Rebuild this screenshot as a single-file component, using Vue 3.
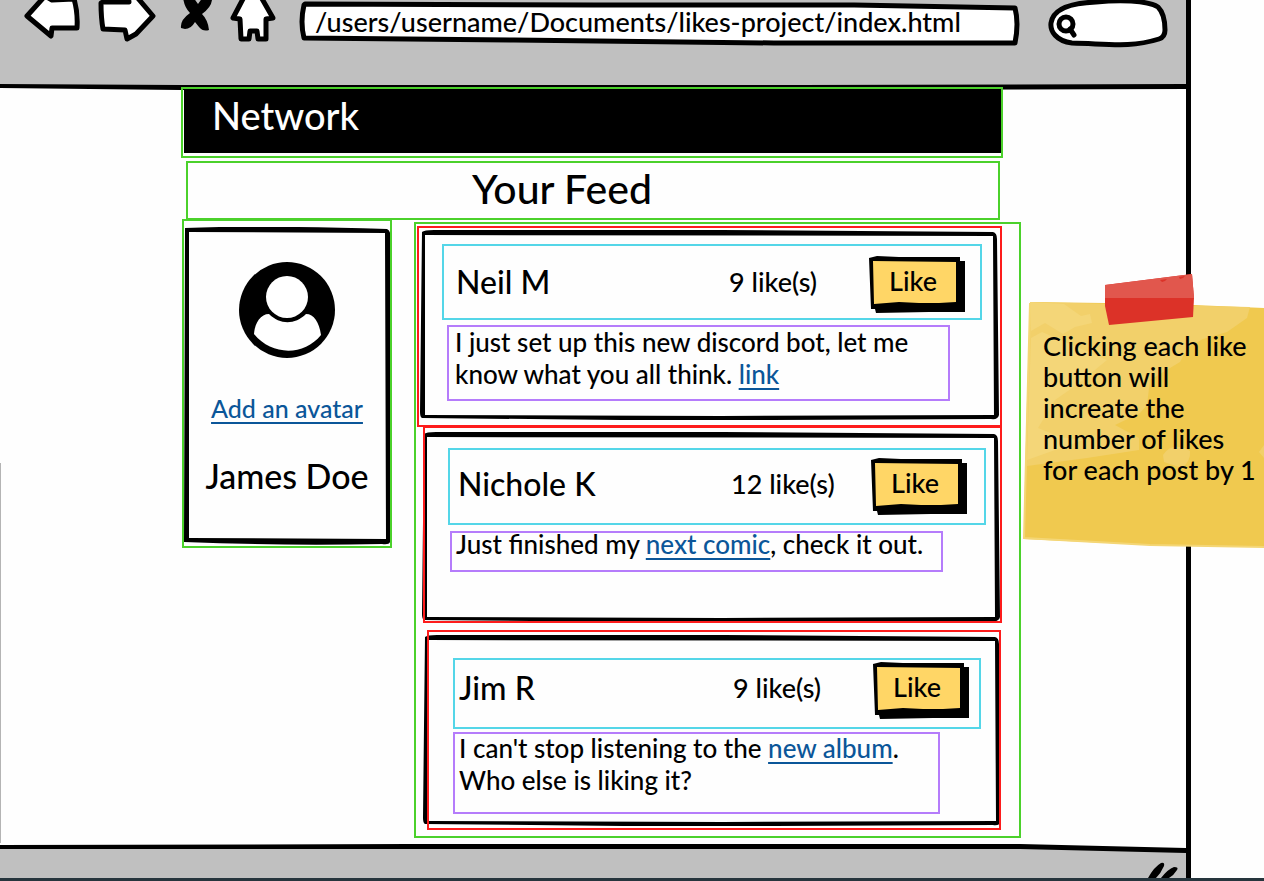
<script setup>
import { ref } from 'vue'

const address = ref('/users/username/Documents/likes-project/index.html')
const query = ref('')

const posts = ref([
  {
    id: 'neil',
    author: 'Neil M',
    likes: 9,
    before: 'I just set up this new discord bot, let me know what you all think. ',
    link: 'link',
    after: ''
  },
  {
    id: 'nichole',
    author: 'Nichole K',
    likes: 12,
    before: 'Just finished my ',
    link: 'next comic',
    after: ', check it out.'
  },
  {
    id: 'jim',
    author: 'Jim R',
    likes: 9,
    before: "I can't stop listening to the ",
    link: 'new album',
    after: '. Who else is liking it?'
  }
])
</script>

<template>
  <div class="board">
    <div class="browser">
      <div class="toolbar">
        <button class="tool" type="button" aria-label="Back">
          <svg viewBox="22 0 60 44" width="60" height="44">
            <path class="shape" d="M45-4 L27 16 L51 36 L52 28 L77 28 Q78 12 74-1 L52 0 Z" />
          </svg>
        </button>
        <button class="tool" type="button" aria-label="Forward">
          <svg viewBox="98 0 60 44" width="60" height="44">
            <path class="shape" d="M101 3 Q101 18 103 29 L125 30 L127 39 L136 34 L153 16 L136-4 L128-5 L129 2 L103 2 Z" />
          </svg>
        </button>
        <button class="tool" type="button" aria-label="Stop">
          <svg viewBox="174 0 40 44" width="40" height="44">
            <path d="M183-3 L193-3 L198 4 L203-3 L212-3 Q213 6 202 14 Q208 20 209 30 Q203 32 199 27 L195 22 Q191 29 185 29 L181 28 Q180 20 190 13 Q184 7 183-3Z" />
          </svg>
        </button>
        <button class="tool" type="button" aria-label="Home">
          <svg viewBox="230 0 48 44" width="48" height="44">
            <path class="shape" d="M244-3 L233 18 L240 19 L241 39 L249 39 L250 31 L257 31 L258 39 L266 39 L266 19 L273 18 L261-3 Z" />
          </svg>
        </button>
        <label class="address">
          <svg class="backdrop" viewBox="0 0 728 48" preserveAspectRatio="none" aria-hidden="true">
            <path class="shape" d="M11 4 L300 5 L560 5 L721 8 Q725 23 721 43 L480 43 L220 40 L10 38 Q6 22 10 5 Z" />
          </svg>
          <input v-model="address" type="text" aria-label="Address" />
        </label>
        <label class="search">
          <svg class="backdrop" viewBox="1038 0 132 48" preserveAspectRatio="none" aria-hidden="true">
            <path class="shape" d="M1072 43 C1056 41 1050 31 1051 23 C1053 9 1070 3 1096 2 C1118 0 1147 0 1158 7 C1164 13 1165 21 1165 30 Q1165 37 1159 39 C1130 48 1110 44 1072 43 Z" />
            <circle class="shape" cx="1066" cy="24" r="7" />
            <path class="shape" d="M1070 29 L1074 35" />
          </svg>
          <input v-model="query" type="search" aria-label="Search" />
        </label>
        <svg class="rule" viewBox="0 0 1186 8" preserveAspectRatio="none" aria-hidden="true">
          <path d="M0 2 L180 3 L800 3 L1186 2 L1186 7 L800 8 L180 8 L0 6 Z" />
        </svg>
      </div>

      <main class="page">
        <header class="banner"><h1>Network</h1></header>
        <h2 class="title">Your Feed</h2>

        <div class="columns">
          <aside class="profile">
            <svg class="backdrop" viewBox="0 0 206 318" preserveAspectRatio="none" aria-hidden="true">
              <path fill-rule="evenodd" d="M1 1 Q70-2 203 2 Q207 4 206 10 L206 315 Q205 318 198 317 Q100 319 0 315 Z M5 5 L201 6 L202 312 L5 311 Z" />
            </svg>
            <svg class="avatar" viewBox="0 0 96 96" role="img" aria-label="Avatar">
              <circle cx="48" cy="48" r="48" />
              <circle class="paper" cx="48" cy="35" r="21" />
              <path class="paper" d="M15 72 C16 60 22 52 30 52 C41 63 56 63 67 52 C75 52 80 60 82 73 C65 94 33 94 15 72Z" />
            </svg>
            <a class="avatar-link" href="#avatar">Add an avatar</a>
            <p class="profile-name">James Doe</p>
          </aside>

          <section class="feed" aria-label="Feed">
            <article v-for="post in posts" :key="post.id" class="post" :class="post.id">
              <svg class="backdrop" viewBox="0 0 578 190" preserveAspectRatio="none" aria-hidden="true">
                <path fill-rule="evenodd" d="M2 2 Q4 0 14 0 L300 0 L572 2 Q576 3 576 9 L578 185 Q577 190 570 189 L350 190 L200 190 L2 188 Q0 187 0 182 L1 90 Z M5 5 L572 6 L573 185 L300 186 L5 185 Z" />
              </svg>
              <div class="meta">
                <h3>{{ post.author }}</h3>
                <span class="likes">{{ post.likes }} like(s)</span>
                <button class="like" type="button" @click="post.likes++">
                  <svg class="backdrop" viewBox="0 0 96 57" preserveAspectRatio="none" aria-hidden="true">
                    <path d="M0 2 L8 0 L30 1 L91 1 L91 5 L96 5 L96 56 L60 56 L7 57 L6 53 L2 53 Z" />
                    <path class="gold" d="M4 5 L87 6 L87 46 L70 47 L50 47 L30 46 L5 48 Z" />
                  </svg>
                  <span>Like</span>
                </button>
              </div>
              <p class="body">{{ post.before }}<a :href="'#' + post.id">{{ post.link }}</a>{{ post.after }}</p>
            </article>
          </section>
        </div>
      </main>

      <footer class="status">
        <svg class="horizon" viewBox="0 0 1186 12" preserveAspectRatio="none" aria-hidden="true">
          <path class="floor" d="M0 4 L410 3 L1020 3 L1186 8 L1186 12 L0 12 Z" />
          <path d="M0 2 L410 1 L1020 1 L1186 5 L1186 10 L1020 6 L410 6 L0 6 Z" />
        </svg>
        <svg class="grip" viewBox="0 0 34 16" width="34" height="16" aria-hidden="true">
          <path d="M0 16 Q6 5 13 1 Q17 0 16 4 Q13 11 8 16 Z M13 16 Q20 7 26 5 Q31 5 29 8 Q26 13 21 16 Z" />
        </svg>
      </footer>
    </div>

    <aside class="note">
      <svg class="backdrop" viewBox="1023 272 241 276" preserveAspectRatio="none" aria-hidden="true">
        <path fill="#f0c94f" d="M1030 302 L1105 303 L1194 305 L1264 308 L1264 547 L1150 545 L1024 539 L1025 480 L1027 400 Z" />
        <path fill="#f2d06a" d="M1030 302 L1250 307 L1247 318 L1227 332 L1203 339 L1188 347 L1180 362 L1150 380 L1147 405 L1140 413 L1115 425 L1139 438 L1139 450 L1087 458 L1027 466 Z" />
        <path fill="#f4d678" d="M1030 302 L1064 304 L1081 316 L1090 314 L1092 323 L1075 327 L1063 334 L1045 323 L1031 331 Z M1031 338 L1042 332 L1107 360 L1078 384 L1055 400 L1038 428 L1060 437 L1083 440 L1027 460 Z" />
        <path fill="#f2d06a" d="M1163 455 Q1172 441 1190 451 Q1191 461 1182 468 L1164 462 Z M1259 452 L1264 445 L1264 458 Z" />
        <path class="edge" d="M1030 303 L1027 420 L1024 538 L1150 545 L1264 547" />
        <path fill="#dc3228" d="M1105 285 L1192 274 L1194 298 L1193 317 L1109 325 L1105 306 Z" />
        <path fill="#e1574d" d="M1105 285 L1192 274 L1194 298 L1105 298 Z" />
        <path fill="#dc3228" d="M1160 280 L1167 279 Q1165 282 1162 282 Z M1179 277 L1185 276 Q1183 279 1180 279 Z" />
      </svg>
      <p>Clicking each like<br />button will<br />increate the<br />number of likes<br />for each post by 1</p>
    </aside>

    <div class="taskbar"></div>
  </div>
</template>

<style>
body {
  margin: 0;
  background: #fefefe;
}
</style>

<style scoped>
.board {
  position: relative;
  display: flex;
  flex-direction: column;
  min-height: 100vh;
  overflow: hidden;
  color: #000;
  font-family: Lato, "Noto Sans", sans-serif;
  font-size: 27px;
  font-weight: 500;
  line-height: 32px;
}
.board *,
.board *::after {
  box-sizing: border-box;
}
h1,
h2,
h3,
p {
  margin: 0;
  font-weight: 500;
}
a {
  color: #0b5699;
  text-decoration-thickness: 2px;
  text-underline-offset: 4px;
}
svg {
  display: block;
}
button,
input {
  padding: 0;
  border: 0;
  background: none;
  color: inherit;
  font: inherit;
}
button {
  cursor: pointer;
}
.backdrop {
  position: absolute;
  inset: 0;
  width: 100%;
  height: 100%;
}
.shape {
  fill: #fff;
  stroke: #000;
  stroke-width: 5px;
  stroke-linejoin: round;
  stroke-linecap: round;
}
.paper {
  fill: #fff;
}
.gold {
  fill: #ffd666;
}

.browser {
  flex: 1;
  display: flex;
  flex-direction: column;
  margin-right: 73px;
  border-right: 5px solid #000;
}
.toolbar {
  position: relative;
  display: flex;
  align-items: flex-start;
  gap: 16px;
  min-height: 89px;
  padding: 0 16px 0 22px;
  background: linear-gradient(#c0c0c0 85px, #fefefe 85px);
}
.tool {
  flex: none;
}
.address {
  position: relative;
  flex: 1;
}
.search {
  position: relative;
  width: 132px;
}
.address input,
.search input {
  position: relative;
  display: block;
  width: 100%;
  height: 48px;
  padding: 0 16px 6px 21px;
  outline: 0;
}
.search input {
  padding-left: 42px;
}
.rule {
  position: absolute;
  left: 0;
  bottom: -1px;
  width: 100%;
  height: 8px;
}

.page {
  flex: 1;
  margin-top: -2px;
  padding: 0 165px 5px 181px;
  position: relative;
}
.page::before {
  content: "";
  position: absolute;
  left: 0;
  top: 376px;
  bottom: 0;
  width: 1px;
  background: #b4b4b4;
}
.banner {
  margin-right: 18px;
  padding: 0 0 3px 1px;
  border: 2px solid #4bd12b;
  min-height: 71px;
}
.banner h1 {
  padding: 3px 28px 15px;
  background: #000;
  color: #fff;
  font-size: 38px;
  line-height: 46px;
}
.title {
  margin: 3px 21px 0 5px;
  padding: 3px 62px 6px 0;
  border: 2px solid #4bd12b;
  font-size: 41px;
  line-height: 46px;
  text-align: center;
}
.columns {
  display: grid;
  grid-template-columns: 210px 1fr;
  gap: 22px;
  align-items: start;
  margin-top: -1px;
  padding-left: 1px;
}
.profile {
  position: relative;
  display: flex;
  flex-direction: column;
  align-items: center;
  min-height: 329px;
  padding-top: 41px;
  border: 2px solid #4bd12b;
}
.profile .backdrop {
  inset: 6px 0 0;
  height: calc(100% - 7px);
}
.avatar {
  position: relative;
  width: 96px;
}
.avatar-link {
  position: relative;
  margin-top: 34px;
  font-size: 25px;
}
.profile-name {
  position: relative;
  margin-top: 32px;
  font-size: 34px;
  line-height: 40px;
}

.feed {
  margin-top: 3px;
  padding: 2px 17px 6px 1px;
  border: 2px solid #4bd12b;
}
.post {
  position: relative;
  min-height: 201px;
  padding: 18px 20px 26px 25px;
}
.post::after {
  content: "";
  position: absolute;
  inset: 0;
  border: 2px solid #fd1c1c;
  pointer-events: none;
}
.post > .backdrop {
  inset: 4px 3px 7px 3px;
  width: calc(100% - 6px);
  height: calc(100% - 11px);
}
.meta {
  position: relative;
  display: grid;
  grid-template-columns: 1fr 140px 96px;
  grid-template-rows: 56px;
  align-items: center;
  min-height: 76px;
  padding: 10px 15px 0 12px;
  border: 2px solid #54d6e8;
}
.meta h3,
.likes {
  padding-bottom: 4px;
}
.meta h3 {
  font-size: 32px;
  line-height: 40px;
}
.like {
  position: relative;
  width: 96px;
  height: 57px;
  padding: 0 8px 6px 0;
}
.like span {
  position: relative;
}
.body {
  position: relative;
  min-height: 76px;
  margin: 5px 32px 0 5px;
  padding: 1px 8px 0;
  box-shadow: inset 0 0 0 2px #b57cfb;
  font-size: 26px;
}

.nichole {
  min-height: 197px;
  margin: -1px 0 0 6px;
  padding: 22px 16px 51px 25px;
}
.nichole > .backdrop {
  inset: 6px 2px 1px -1px;
  width: calc(100% - 1px);
  height: calc(100% - 7px);
}
.nichole .meta {
  min-height: 77px;
  padding: 8px 17px 0 8px;
}
.nichole .body {
  min-height: 41px;
  margin: 6px 43px 0 2px;
  padding: 0 6px;
  line-height: 26px;
}

.jim {
  min-height: 200px;
  margin: 7px 1px 0 10px;
  padding: 28px 20px 16px 26px;
}
.jim > .backdrop {
  inset: 5px 0 4px -4px;
  width: calc(100% + 4px);
  height: calc(100% - 9px);
}
.jim .meta {
  min-height: 71px;
  padding: 2px 10px 0 4px;
}
.jim .body {
  min-height: 82px;
  margin: 3px 41px 0 0;
  padding: 0 6px;
}

.status {
  position: relative;
  display: flex;
  align-items: flex-end;
  justify-content: flex-end;
  min-height: 35px;
  padding-right: 4px;
  background: linear-gradient(#fefefe 10px, #c0c0c0 10px);
}
.horizon {
  position: absolute;
  left: 0;
  top: 0;
  width: 100%;
  height: 12px;
}
.floor {
  fill: #c0c0c0;
}
.note {
  position: absolute;
  top: 272px;
  right: 0;
  width: 241px;
  min-height: 276px;
  padding: 58px 0 0 20px;
  line-height: 31px;
}
.note p {
  position: relative;
  white-space: nowrap;
}
.edge {
  fill: none;
  stroke: #f4d675;
  stroke-width: 2px;
}
.taskbar {
  height: 3px;
  background: #26353d;
}
</style>
